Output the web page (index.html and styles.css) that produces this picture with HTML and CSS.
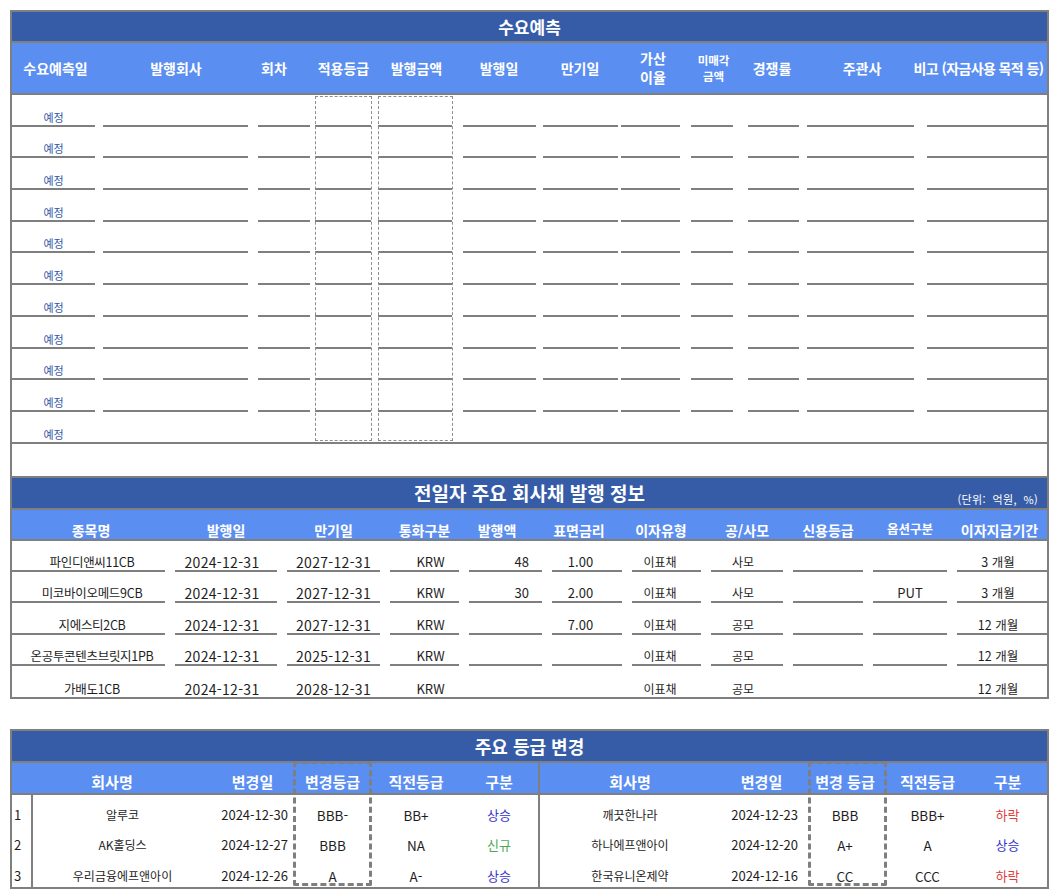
FILE: index.html
```html
<!DOCTYPE html>
<html lang="ko">
<head>
<meta charset="utf-8">
<title>수요예측</title>
<link rel="stylesheet" href="styles.css">
</head>
<body>
<div class="sheet">
  <div class="bar bar-top">수요예측</div>
  <div class="fc-head">
    <div class="h">수요예측일</div>
    <div class="h">발행회사</div>
    <div class="h">회차</div>
    <div class="h">적용등급</div>
    <div class="h">발행금액</div>
    <div class="h">발행일</div>
    <div class="h">만기일</div>
    <div class="h two">가산<br>이율</div>
    <div class="h two sm">미매각<br>금액</div>
    <div class="h">경쟁률</div>
    <div class="h">주관사</div>
    <div class="h">비고 (자금사용 목적 등)</div>
  </div>
  <div class="fc-body">
    <div class="fc-row"><div class="u"><span class="plan">예정</span></div><div class="u"></div><div class="u"></div><div class="u"></div><div class="u"></div><div class="u"></div><div class="u"></div><div class="u"></div><div class="u"></div><div class="u"></div><div class="u"></div><div class="u"></div></div>
    <div class="fc-row"><div class="u"><span class="plan">예정</span></div><div class="u"></div><div class="u"></div><div class="u"></div><div class="u"></div><div class="u"></div><div class="u"></div><div class="u"></div><div class="u"></div><div class="u"></div><div class="u"></div><div class="u"></div></div>
    <div class="fc-row"><div class="u"><span class="plan">예정</span></div><div class="u"></div><div class="u"></div><div class="u"></div><div class="u"></div><div class="u"></div><div class="u"></div><div class="u"></div><div class="u"></div><div class="u"></div><div class="u"></div><div class="u"></div></div>
    <div class="fc-row"><div class="u"><span class="plan">예정</span></div><div class="u"></div><div class="u"></div><div class="u"></div><div class="u"></div><div class="u"></div><div class="u"></div><div class="u"></div><div class="u"></div><div class="u"></div><div class="u"></div><div class="u"></div></div>
    <div class="fc-row"><div class="u"><span class="plan">예정</span></div><div class="u"></div><div class="u"></div><div class="u"></div><div class="u"></div><div class="u"></div><div class="u"></div><div class="u"></div><div class="u"></div><div class="u"></div><div class="u"></div><div class="u"></div></div>
    <div class="fc-row"><div class="u"><span class="plan">예정</span></div><div class="u"></div><div class="u"></div><div class="u"></div><div class="u"></div><div class="u"></div><div class="u"></div><div class="u"></div><div class="u"></div><div class="u"></div><div class="u"></div><div class="u"></div></div>
    <div class="fc-row"><div class="u"><span class="plan">예정</span></div><div class="u"></div><div class="u"></div><div class="u"></div><div class="u"></div><div class="u"></div><div class="u"></div><div class="u"></div><div class="u"></div><div class="u"></div><div class="u"></div><div class="u"></div></div>
    <div class="fc-row"><div class="u"><span class="plan">예정</span></div><div class="u"></div><div class="u"></div><div class="u"></div><div class="u"></div><div class="u"></div><div class="u"></div><div class="u"></div><div class="u"></div><div class="u"></div><div class="u"></div><div class="u"></div></div>
    <div class="fc-row"><div class="u"><span class="plan">예정</span></div><div class="u"></div><div class="u"></div><div class="u"></div><div class="u"></div><div class="u"></div><div class="u"></div><div class="u"></div><div class="u"></div><div class="u"></div><div class="u"></div><div class="u"></div></div>
    <div class="fc-row"><div class="u"><span class="plan">예정</span></div><div class="u"></div><div class="u"></div><div class="u"></div><div class="u"></div><div class="u"></div><div class="u"></div><div class="u"></div><div class="u"></div><div class="u"></div><div class="u"></div><div class="u"></div></div>
    <div class="fc-row fc-end"><div class="c"><span class="plan">예정</span></div></div>
    <div class="dash-col col-grade"></div>
    <div class="dash-col col-amount"></div>
  </div>
  <div class="gap"></div>
  <div class="bar bar-mid">전일자 주요 회사채 발행 정보<span class="unit">(단위:&nbsp; 억원,&nbsp; %)</span></div>
  <div class="is-head">
    <div class="h">종목명</div>
    <div class="h">발행일</div>
    <div class="h">만기일</div>
    <div class="h">통화구분</div>
    <div class="h">발행액</div>
    <div class="h">표면금리</div>
    <div class="h">이자유형</div>
    <div class="h">공/사모</div>
    <div class="h">신용등급</div>
    <div class="h sm">옵션구분</div>
    <div class="h">이자지급기간</div>
  </div>
  <div class="is-row"><div class="u">파인디앤씨11CB</div><div class="u">2024-12-31</div><div class="u">2027-12-31</div><div class="u">KRW</div><div class="u">48</div><div class="u">1.00</div><div class="u">이표채</div><div class="u">사모</div><div class="u"></div><div class="u"></div><div class="u">3 개월</div></div>
  <div class="is-row"><div class="u">미코바이오메드9CB</div><div class="u">2024-12-31</div><div class="u">2027-12-31</div><div class="u">KRW</div><div class="u">30</div><div class="u">2.00</div><div class="u">이표채</div><div class="u">사모</div><div class="u"></div><div class="u">PUT</div><div class="u">3 개월</div></div>
  <div class="is-row"><div class="u">지에스티2CB</div><div class="u">2024-12-31</div><div class="u">2027-12-31</div><div class="u">KRW</div><div class="u"></div><div class="u">7.00</div><div class="u">이표채</div><div class="u">공모</div><div class="u"></div><div class="u"></div><div class="u">12 개월</div></div>
  <div class="is-row"><div class="u">온공투콘텐츠브릿지1PB</div><div class="u">2024-12-31</div><div class="u">2025-12-31</div><div class="u">KRW</div><div class="u"></div><div class="u"></div><div class="u">이표채</div><div class="u">공모</div><div class="u"></div><div class="u"></div><div class="u">12 개월</div></div>
  <div class="is-row is-end"><div class="u">가배도1CB</div><div class="u">2024-12-31</div><div class="u">2028-12-31</div><div class="u">KRW</div><div class="u"></div><div class="u"></div><div class="u">이표채</div><div class="u">공모</div><div class="u"></div><div class="u"></div><div class="u">12 개월</div></div>
</div>

<div class="sheet grade">
  <div class="bar bar-grade">주요 등급 변경</div>
  <div class="gr-head">
    <div class="h wide">회사명</div>
    <div class="h">변경일</div>
    <div class="h">변경등급</div>
    <div class="h">직전등급</div>
    <div class="h split">구분</div>
    <div class="h">회사명</div>
    <div class="h">변경일</div>
    <div class="h">변경 등급</div>
    <div class="h">직전등급</div>
    <div class="h">구분</div>
  </div>
  <div class="gr-row"><div class="idx">1</div><div class="nm">알루코</div><div class="dt">2024-12-30</div><div class="gd">BBB-</div><div class="gd">BB+</div><div class="ty split up">상승</div><div class="nm">깨끗한나라</div><div class="dt">2024-12-23</div><div class="gd">BBB</div><div class="gd">BBB+</div><div class="ty down">하락</div></div>
  <div class="gr-row"><div class="idx">2</div><div class="nm">AK홀딩스</div><div class="dt">2024-12-27</div><div class="gd">BBB</div><div class="gd">NA</div><div class="ty split new">신규</div><div class="nm">하나에프앤아이</div><div class="dt">2024-12-20</div><div class="gd">A+</div><div class="gd">A</div><div class="ty up">상승</div></div>
  <div class="gr-row"><div class="idx">3</div><div class="nm">우리금융에프앤아이</div><div class="dt">2024-12-26</div><div class="gd">A</div><div class="gd">A-</div><div class="ty split up">상승</div><div class="nm">한국유니온제약</div><div class="dt">2024-12-16</div><div class="gd">CC</div><div class="gd">CCC</div><div class="ty down">하락</div></div>
  <div class="dash-box box-left"></div>
  <div class="dash-box box-right"></div>
</div>
</body>
</html>
```

FILE: styles.css
```css
* { box-sizing: border-box; margin: 0; padding: 0; }

body {
  background: #ffffff;
  padding: 10px 0 0 10px;
  font-family: "Noto Sans CJK KR", "Noto Sans", sans-serif;
  color: #1e1e1e;
}

.sheet {
  width: 1039px;
  border: 2px solid #7f7f7f;
  position: relative;
}

/* title bars */
.bar {
  background: #375ca7;
  color: #ffffff;
  font-weight: 700;
  display: flex;
  align-items: center;
  justify-content: center;
  border-bottom: 2px solid #7f7f7f;
  position: relative;
  line-height: 20px;
}
.bar-top { height: 31px; font-size: 17px; }
.bar-mid { height: 34px; font-size: 19px; border-top: 2px solid #7f7f7f; }
.bar-grade { height: 32px; font-size: 18px; }

.unit {
  position: absolute;
  right: 9px;
  bottom: 2px;
  font-size: 11px;
  font-weight: 400;
  line-height: 14px;
  letter-spacing: 0.3px;
}

/* header cells */
.h {
  color: #ffffff;
  font-weight: 700;
  display: flex;
  justify-content: center;
  white-space: nowrap;
  line-height: 18px;
}

/* ---------- 수요예측 ---------- */
.fc-head,
.fc-row {
  display: grid;
  grid-template-columns: 87px 154px 59px 63px 83px 82px 80px 66px 55px 62px 118px 126px;
}

.fc-head {
  height: 52px;
  background: #5b8ef1;
  border-bottom: 2px solid #7f7f7f;
  font-size: 14px;
}
.fc-head .h { align-items: center; }
.fc-head .two { text-align: center; line-height: 19px; }
.fc-head .two.sm { font-size: 11.5px; line-height: 16px; }
.fc-head > :nth-child(3) { padding-right: 17px; }
.fc-head > :nth-child(12) { padding-right: 11px; letter-spacing: -0.6px; }

.fc-body { position: relative; }

.fc-row { height: 31.7px; }

.fc-row .u,
.fc-row .c {
  display: flex;
  align-items: flex-end;
  justify-content: center;
}
.fc-row .u { border-bottom: 2px solid #7f7f7f; }
.fc-row > :nth-child(1) { margin: 0 4px 0 0; }
.fc-row > :nth-child(2) { margin: 0 5px 0 4px; }
.fc-row > :nth-child(3) { margin: 0 2px 0 5px; }
.fc-row > :nth-child(4) { margin: 0 4px 0 3px; }
.fc-row > :nth-child(5) { margin: 0 6px 0 3px; }
.fc-row > :nth-child(6) { margin: 0 4px 0 5px; }
.fc-row > :nth-child(7) { margin: 0 2px 0 3px; }
.fc-row > :nth-child(8) { margin: 0 6px 0 1px; }
.fc-row > :nth-child(9) { margin: 0 8px 0 5px; }
.fc-row > :nth-child(10) { margin: 0 4px 0 7px; }
.fc-row > :nth-child(11) { margin: 0 7px 0 4px; }
.fc-row > :nth-child(12) { margin: 0 0 0 6px; }

.fc-row.fc-end { border-bottom: 2px solid #7f7f7f; }

.plan {
  color: #2f56a6;
  font-size: 11px;
  line-height: 14px;
  padding-bottom: 1px;
}

.dash-col {
  position: absolute;
  top: 1px;
  height: 345px;
  border: 1px dashed #8e8e8e;
}
.col-grade { left: 303px; width: 57px; }
.col-amount { left: 366px; width: 75px; }

.gap { height: 32.3px; }

/* ---------- 회사채 발행 정보 ---------- */
.is-head,
.is-row {
  display: grid;
  grid-template-columns: 158px 112px 103px 79px 83px 80px 79px 82px 80px 84px 95px;
}

.is-head {
  height: 31px;
  background: #5b8ef1;
  border-bottom: 2px solid #7f7f7f;
  font-size: 14px;
}
.is-head .h { align-items: flex-end; }
.is-head .sm { font-size: 12.5px; padding-bottom: 1px; }
.is-head > :nth-child(5) { padding-right: 17px; }
.is-head > :nth-child(6) { padding-right: 16px; }
.is-head > :nth-child(7) { padding-right: 11px; }

.is-row { height: 31.3px; }
.is-row .u {
  display: flex;
  align-items: flex-end;
  justify-content: center;
  border-bottom: 2px solid #7f7f7f;
  margin: 0 5px;
  font-size: 12.5px;
  line-height: 16px;
  white-space: nowrap;
  color: #1e1e1e;
}
.is-row > :first-child { margin-left: 0; padding-left: 7px; letter-spacing: -0.3px; }
.is-row > :last-child { margin-right: 0; padding-right: 8px; }
.is-row > :nth-child(2) { padding-right: 8px; }
.is-row > :nth-child(2),
.is-row > :nth-child(3) { font-size: 14px; letter-spacing: 0.3px; }
.is-row > :nth-child(4) { padding-left: 12px; font-size: 13px; }
.is-row > :nth-child(5) { justify-content: flex-end; padding-right: 13px; font-size: 13px; }
.is-row > :nth-child(6) { padding-right: 13px; font-size: 13px; }
.is-row > :nth-child(7) { padding-right: 13px; font-size: 12px; }
.is-row > :nth-child(8) { padding-right: 8px; font-size: 12px; }
.is-row > :nth-child(10) { font-size: 13px; }
.is-row.is-end .u { border-bottom: 0; }

/* ---------- 주요 등급 변경 ---------- */
.grade { margin-top: 30px; }

.gr-head,
.gr-row {
  display: grid;
  grid-template-columns: 21px 179px 81px 79px 88px 80px 180px 83px 84px 81px 79px;
}

.gr-head {
  height: 32px;
  background: #5b8ef1;
  border-bottom: 2px solid #7f7f7f;
  font-size: 15px;
}
.gr-head .h { align-items: flex-end; padding-bottom: 2px; }
.gr-head .wide { grid-column: span 2; }
.split { border-right: 2px solid #7f7f7f; }

.gr-row { height: 30.5px; font-size: 13px; line-height: 16px; }
.gr-row > div {
  display: flex;
  align-items: flex-end;
  justify-content: center;
  padding-bottom: 3px;
  white-space: nowrap;
}
.gr-row .idx {
  justify-content: flex-start;
  padding-left: 2px;
  border-right: 2px solid #7f7f7f;
}
.gr-row .nm { font-size: 12px; }
.gr-row .dt { justify-content: flex-end; padding-right: 5px; }
.gr-row .gd { font-size: 13.5px; }
.gr-row .ty { font-size: 13px; }
.up { color: #3535c8; }
.new { color: #4caa55; }
.down { color: #e03c3c; }

.dash-box {
  position: absolute;
  top: 30px;
  height: 125px;
  width: 79px;
  border: 3px dashed #7f7f7f;
  border-radius: 2px;
}
.box-left { left: 281px; }
.box-right { left: 796px; }
```
